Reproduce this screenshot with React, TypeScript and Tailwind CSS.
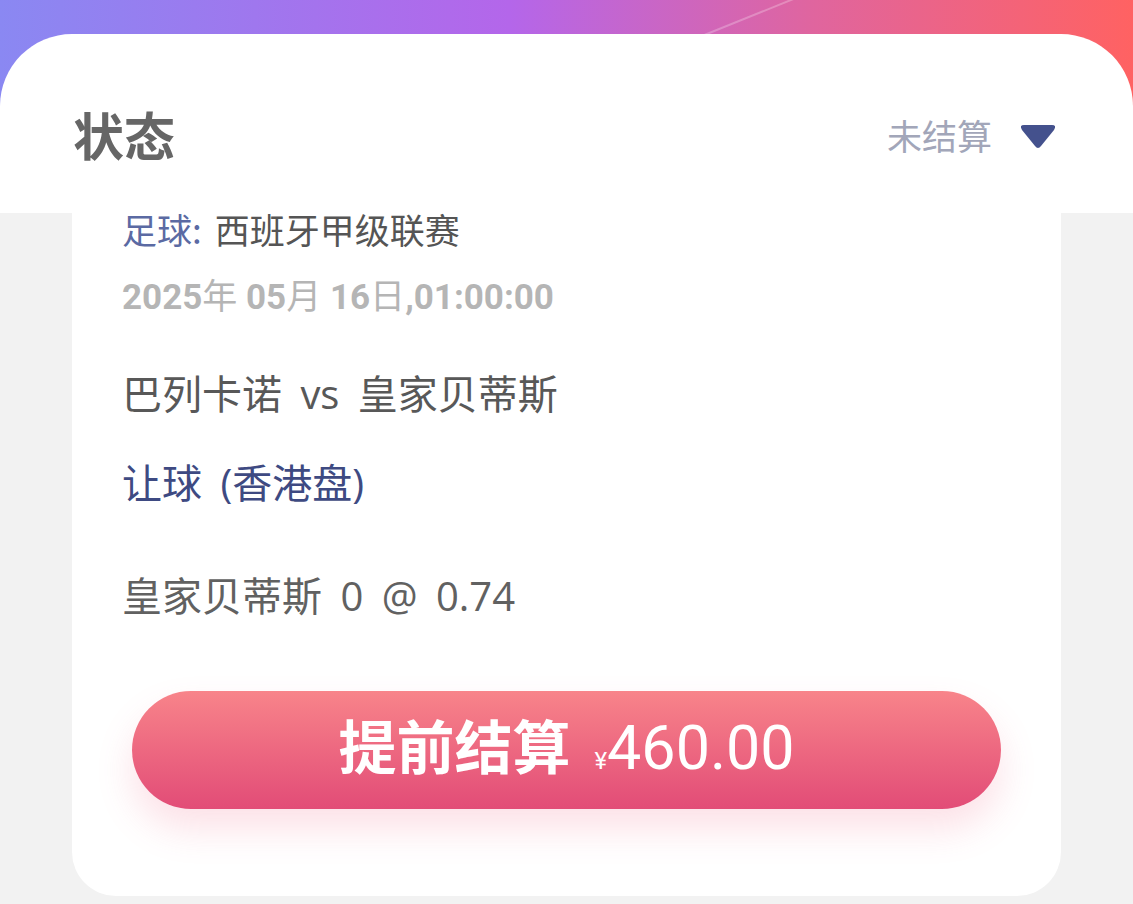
import React from 'react';

const font = { fontFamily: '"Noto Sans CJK SC", sans-serif' };
const mixed = { fontFamily: 'Roboto, "Noto Sans CJK SC", sans-serif' };
const wide = { fontFamily: '"Open Sans", "Noto Sans CJK SC", sans-serif' };

const Header: React.FC = () => (
  <div className="relative h-[213px] bg-[linear-gradient(90deg,#8a88f2_0%,#b466ea_45%,#e0659e_72%,#ff6262_100%)]">
    <div className="absolute left-[640px] top-0 h-[2px] w-[220px] origin-left -rotate-[22deg] translate-y-[60px] bg-white/25" />
    <div className="absolute inset-x-0 top-[34px] bottom-0 flex items-center justify-between rounded-t-[72px] bg-white pl-[73px] pr-[76px] pt-[21px]">
      <span className="text-[51px] font-bold leading-none text-[#666666]">状态</span>
      <div className="flex items-center gap-[27px]">
        <span className="text-[35px] leading-none text-[#a2a6b9]">未结算</span>
        <svg width="38" height="27" viewBox="0 0 38 27" className="mt-[6px]">
          <path d="M5 1 H33 Q38 1 35 6 L22 22 Q19 26 16 22 L3 6 Q0 1 5 1 Z" fill="#44518d" />
        </svg>
      </div>
    </div>
  </div>
);

const Card: React.FC = () => (
  <div className="mx-[72px] rounded-b-[44px] bg-white px-[50px] pb-[87px]">
    <div className="box-content flex h-[24px] items-center pt-[4px] text-[35px] leading-[24px]">
      <span className="text-[#5b6aa3]">足球:</span>
      <span className="ml-[13px] text-[#555555]">西班牙甲级联赛</span>
    </div>
    <div className="mt-[39px] text-[35px] font-bold leading-none text-[#b5b5b5]" style={mixed}>
      2025<span className="font-normal">年</span> 05<span className="font-normal">月</span> 16<span className="font-normal">日</span>,01:00:00
    </div>
    <div className="mt-[59px] text-[40px] leading-none text-[#585858] [word-spacing:8px]" style={wide}>巴列卡诺 vs 皇家贝蒂斯</div>
    <div className="mt-[49px] text-[40px] leading-none text-[#3e4a82] [word-spacing:8px]" style={wide}>让球 (香港盘)</div>
    <div className="mt-[73px] text-[40px] leading-none text-[#616161] [word-spacing:8px]" style={wide}>皇家贝蒂斯 0 @ 0.74</div>
    <div className="mt-[75px] px-[10px]">
      <button className="flex h-[118px] w-full items-baseline justify-center rounded-full bg-[linear-gradient(180deg,#f8848a_0%,#e24c77_100%)] pt-[24px] text-white shadow-[0_20px_36px_rgba(240,90,120,0.18)]">
        <span className="text-[58px] font-bold leading-none">提前结算</span>
        <span className="ml-[24px] text-[24px] leading-none" style={mixed}>¥</span>
        <span className="text-[61px] leading-none" style={mixed}>460.00</span>
      </button>
    </div>
  </div>
);

export default function App() {
  return (
    <div className="min-h-[904px] w-[1133px] overflow-hidden bg-[#f2f2f2]" style={font}>
      <Header />
      <Card />
    </div>
  );
}
